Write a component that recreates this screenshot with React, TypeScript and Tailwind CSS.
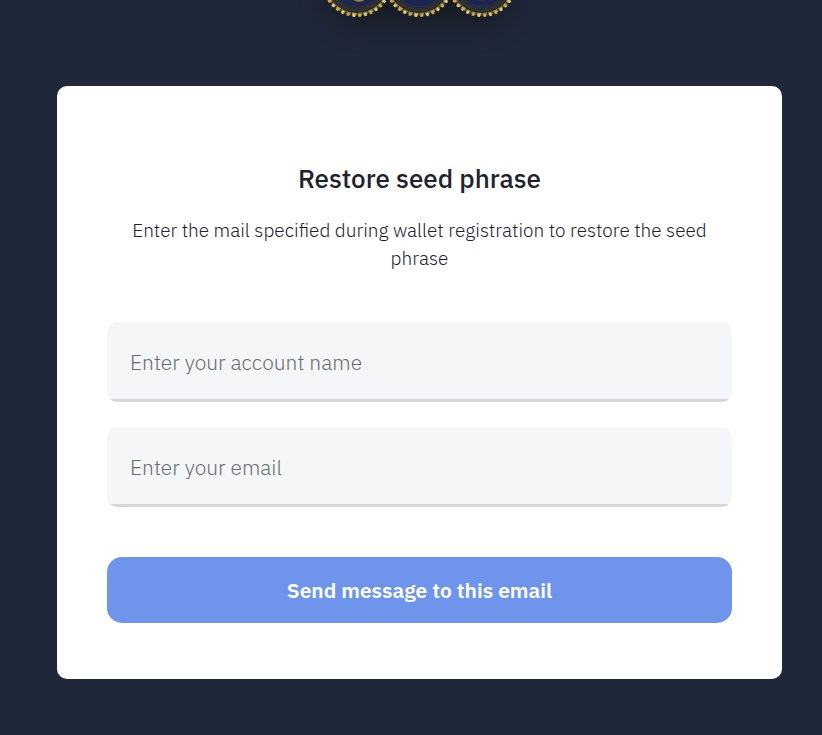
import React from "react";

const medallions = [357, 419, 482];
const toothAngles = Array.from({ length: 36 }, (_, i) => i * 10 + 5);

function Medallion({ cx }: { cx: number }) {
  return (
    <g transform={`translate(${cx} -18) scale(1.03)`}>
      <circle r="32" fill="#252a35" />
      <circle r="30" fill="none" stroke="#33332f" strokeWidth="1" />
      <circle r="27" fill="none" stroke="#3b3834" strokeWidth="3" strokeDasharray="1 1" />
      <circle r="24" fill="#1b2553" />
      <circle r="24" fill="none" stroke="#302f3c" strokeWidth="1" />
      {toothAngles.map((angle, i) => (
        <g key={angle} transform={`rotate(${angle})`}>
          <rect x="-2.2" y="30" width="4.4" height="2.8" fill={i % 3 === 0 ? "#a8954c" : "#92792f"} />
          <rect x="-1.5" y="31" width="2.6" height="3" fill={i % 2 === 0 ? "#d8cf86" : "#d6a648"} />
        </g>
      ))}
    </g>
  );
}

function Field({ id, label, type }: { id: string; label: string; type: string }) {
  return (
    <input
      id={id}
      type={type}
      aria-label={label}
      placeholder={label}
      className="block h-20 w-full rounded-[10px] bg-[linear-gradient(to_top,#d5d7e0_3px,#f4f6f8_3px)] px-[23px] font-light text-[21px] text-[#20222f] outline-none placeholder:text-[#6c6c6c]"
    />
  );
}

export default function App() {
  return (
    <div className="min-h-screen bg-[#1f273b] pb-14 font-['IBM_Plex_Sans','Noto_Sans',sans-serif]">
      <header className="flex h-[86px] justify-center overflow-hidden pl-[17px]">
        <svg width="240" height="86" viewBox="300 0 240 86" className="shrink-0 overflow-visible" role="img" aria-label="Medallions">
          <defs>
            <filter id="shade" filterUnits="userSpaceOnUse" x="240" y="-120" width="360" height="240" colorInterpolationFilters="sRGB">
              <feGaussianBlur stdDeviation="14" />
            </filter>
            <radialGradient id="gold">
              <stop offset="0" stopColor="#d9b952" />
              <stop offset="1" stopColor="#6c5b30" />
            </radialGradient>
          </defs>
          <rect x="326" y="-60" width="186" height="84" rx="30" fill="#15191f" opacity="0.85" filter="url(#shade)" />
          {medallions.map((cx) => (
            <Medallion key={cx} cx={cx} />
          ))}
          <ellipse cx="359" cy="-1" rx="6" ry="3" fill="url(#gold)" />
          <ellipse cx="482" cy="-1" rx="6" ry="2" fill="#302d38" />
        </svg>
      </header>
      <main className="mr-10 ml-[57px] rounded-[10px] bg-white px-[50px] pt-[76px] pb-14">
        <h1 className="text-center text-[26px] leading-8 font-medium text-[#20222f]">Restore seed phrase</h1>
        <p className="mt-[22px] px-5 text-center text-[19px] leading-7 font-light text-[#20222f]">
          Enter the mail specified during wallet registration to restore the seed phrase
        </p>
        <form className="mt-[50px]" onSubmit={(event) => event.preventDefault()}>
          <div className="flex flex-col gap-[25px]">
            <Field id="account" type="text" label="Enter your account name" />
            <Field id="email" type="email" label="Enter your email" />
          </div>
          <button type="submit" className="mt-[50px] h-[66px] w-full rounded-[15px] bg-[#6f94ec] pt-px text-[21px] font-semibold text-white">
            Send message to this email
          </button>
        </form>
      </main>
    </div>
  );
}
